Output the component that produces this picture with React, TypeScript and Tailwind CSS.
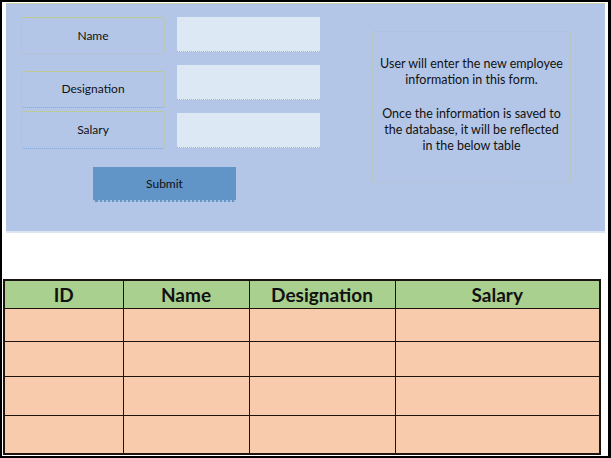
const font = { fontFamily: "Lato, 'Open Sans', sans-serif" };

function App() {
  return (
    <div
      className="w-[611px] h-[458px] bg-white border-t-2 border-l-2 border-b-2 border-r-[3px] border-black text-[#111]"
      style={font}
    >
      {/* Form panel */}
      <div className="ml-[4px] mr-[3px] mt-[1px] h-[228px] bg-[#b4c6e7] flex border-t border-dotted border-[#c9d3a8] shadow-[0_2px_0_#dfe6f3]">
        <div className="flex flex-col">
          <div className="flex pt-[13px]">
            {/* Labels */}
            <div className="ml-[15px] w-[144px] flex flex-col">
              <div className="h-[37px] flex items-center justify-center text-[12px] border border-dotted border-[#b9c690] rounded-[3px]">
                Name
              </div>
              <div className="mt-[17px] h-[37px] flex items-center justify-center text-[12px] pb-[2px] border border-dotted border-[#b9c690] border-b-[#7fa6d8] rounded-[3px]">
                Designation
              </div>
              <div className="mt-[3px] h-[38px] flex items-center justify-center text-[12px] border border-dotted border-[#b9c690] border-b-[#7fa6d8] rounded-[3px]">
                Salary
              </div>
            </div>
            {/* Inputs */}
            <div className="ml-[12px] w-[143px] flex flex-col gap-[13px]">
              <div className="h-[35px] bg-[#dde8f5] border-b border-dotted border-[#9fb4d6]" />
              <div className="h-[35px] bg-[#dde8f5] border-b border-dotted border-[#9fb4d6]" />
              <div className="h-[35px] bg-[#dde8f5] border-b border-dotted border-[#9fb4d6]" />
            </div>
          </div>
          <button className="ml-[87px] mt-[18px] w-[143px] h-[35px] bg-[#6195c7] text-[12px] text-[#111] border-b-2 border-dotted border-[#a9c2e4]">
            Submit
          </button>
        </div>
        {/* Info box */}
        <div className="ml-[52px] mt-[27px] w-[199px] h-[152px] border border-dotted border-[#b8c59a] rounded-[3px] flex items-center justify-center text-center text-[12.5px] leading-[16px] pb-[4px]">
          <div>
            <p>User will enter the new employee</p>
            <p>information in this form.</p>
            <p className="mt-[18px]">Once the information is saved to</p>
            <p>the database, it will be reflected</p>
            <p>in the below table</p>
          </div>
        </div>
      </div>

      {/* Table */}
      <table className="ml-[1px] mt-[48px] w-[598px] border-collapse border-2 border-[#1c1410] bg-[#f8cbad]">
        <colgroup>
          <col className="w-[119px]" />
          <col className="w-[126px]" />
          <col className="w-[146px]" />
          <col />
        </colgroup>
        <thead>
          <tr className="h-[28px] bg-[#a9d08e] text-[19px] font-bold">
            <th className="border-[1.5px] border-[#1c1410] leading-none">ID</th>
            <th className="border-[1.5px] border-[#1c1410] leading-none">Name</th>
            <th className="border-[1.5px] border-[#1c1410] leading-none">Designation</th>
            <th className="border-[1.5px] border-[#1c1410] leading-none">Salary</th>
          </tr>
        </thead>
        <tbody>
          {[33, 35, 39, 39].map((h, i) => (
            <tr key={i} style={{ height: h }}>
              <td className="border-[1.5px] border-[#1c1410]" />
              <td className="border-[1.5px] border-[#1c1410]" />
              <td className="border-[1.5px] border-[#1c1410]" />
              <td className="border-[1.5px] border-[#1c1410]" />
            </tr>
          ))}
        </tbody>
      </table>
    </div>
  );
}

export default App;
